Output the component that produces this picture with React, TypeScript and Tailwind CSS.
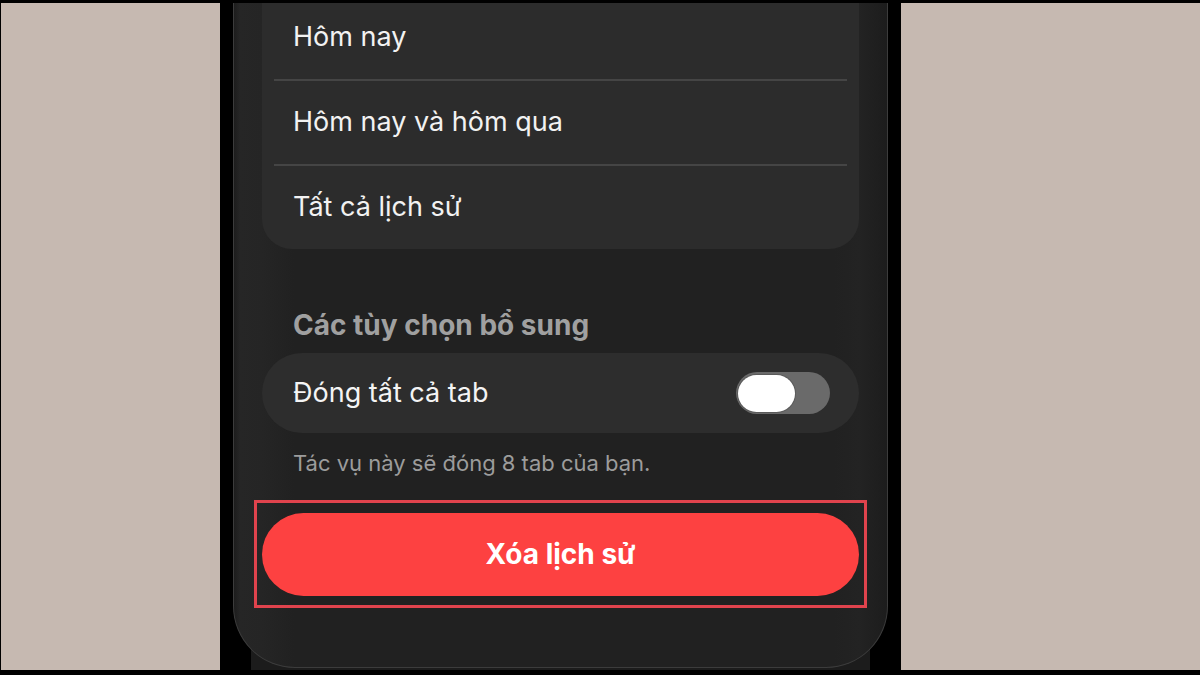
const rows = ['Hôm nay', 'Hôm nay và hôm qua', 'Tất cả lịch sử']

function Toggle() {
  return (
    <div className="flex h-[42px] w-[94px] items-center rounded-full bg-[#6a6a6a] px-[2px]">
      <div className="h-[37px] w-[57px] rounded-full bg-white shadow-[0_0_0_1px_rgba(0,0,0,0.15)]" />
    </div>
  )
}

export default function App() {
  return (
    <div
      className="flex h-[675px] w-[1200px] overflow-hidden bg-black pt-[3px] pb-[5px] pl-[1px]"
      style={{ fontFamily: 'Inter, "Noto Sans", sans-serif' }}
    >
      <div className="w-[219px] shrink-0 bg-[#c6b9b1]" />
      <div className="w-[13px] shrink-0 bg-black" />

      <div className="flex w-[655px] shrink-0 flex-col bg-black">
        <div className="mx-[18px] flex flex-1 flex-col bg-[#1c1c1c]">
          <div className="-mx-[18px] flex h-[665px] flex-col overflow-hidden rounded-b-[62px] border-x border-b border-[#3c3c3c] bg-[linear-gradient(90deg,#1d1d1d_0px,#262626_6px,#252525_28px,#212121_60px,#212121_600px,#232323_625px,#1c1c1c_655px)] px-[28px]">
            <div className="-mt-[7px] flex flex-col rounded-b-[30px] bg-[#2c2c2c]">
              {rows.map((r, i) => (
                <div key={r}>
                  <div className="flex h-[83px] items-center pl-[31px] text-[27px] text-[#f2f2f2]">
                    {r}
                  </div>
                  {i < 2 && <div className="mx-[12px] h-[2px] bg-[#454545]" />}
                </div>
              ))}
            </div>

            <div className="mt-[60px] pl-[31px] text-[28px] font-bold leading-[32px] text-[#a0a0a0]">
              Các tùy chọn bổ sung
            </div>

            <div className="mt-[12px] flex h-[80px] items-center justify-between rounded-full bg-[#2d2d2d] pl-[31px] pr-[29px]">
              <span className="text-[27px] text-[#f4f4f4]">Đóng tất cả tab</span>
              <Toggle />
            </div>

            <div className="mt-[17px] pl-[31px] text-[22px] leading-[26px] text-[#9c9c9c]">
              Tác vụ này sẽ đóng 8 tab của bạn.
            </div>

            <div className="-mx-[8px] mt-[24px] flex h-[108px] items-center border-[3px] border-[#e0434d] px-[5px]">
              <div className="flex h-[83px] w-full items-center justify-center rounded-[42px] bg-[#fd4141]">
                <span className="text-[28px] font-bold text-white">Xóa lịch sử</span>
              </div>
            </div>
          </div>
        </div>
      </div>

      <div className="w-[13px] shrink-0 bg-black" />
      <div className="flex-1 bg-[#c6b9b1]" />
    </div>
  )
}
